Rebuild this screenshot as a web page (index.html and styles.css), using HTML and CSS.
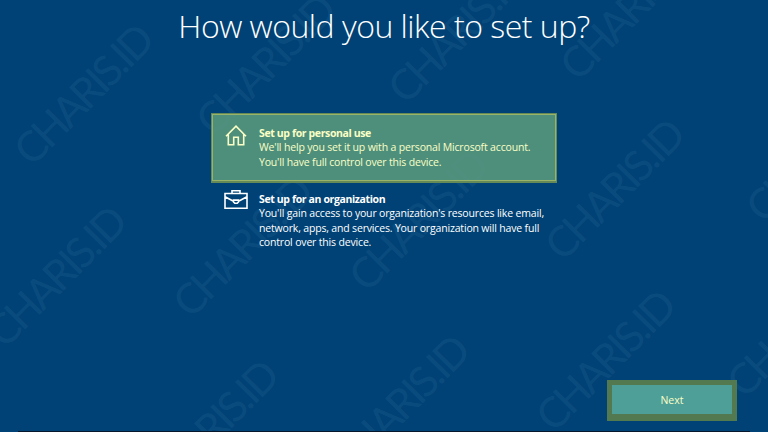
FILE: index.html
```html
<!DOCTYPE html>
<html lang="en">
<head>
  <meta charset="UTF-8" />
  <meta name="viewport" content="width=device-width, initial-scale=1.0"/>
  <title>How would you like to set up?</title>
  <link rel="stylesheet" href="styles.css">
</head>
<body>
  <svg class="watermark" viewBox="0 0 768 432" aria-hidden="true">
    <defs>
      <text id="mark" x="-19" y="16" textLength="178" lengthAdjust="spacing" transform="rotate(-45.3)">CHARIS.ID</text>
    </defs>
    <use href="#mark" x="34" y="143"/>
    <use href="#mark" x="216" y="113"/>
    <use href="#mark" x="408" y="81"/>
    <use href="#mark" x="580" y="58"/>
    <use href="#mark" x="7" y="325"/>
    <use href="#mark" x="193" y="295"/>
    <use href="#mark" x="369" y="269"/>
    <use href="#mark" x="565" y="238"/>
    <use href="#mark" x="766" y="200"/>
    <use href="#mark" x="159" y="479"/>
    <use href="#mark" x="350" y="454"/>
    <use href="#mark" x="556" y="409"/>
    <use href="#mark" x="747" y="375"/>
  </svg>

  <main class="page">
    <h1>How would you like to set up?</h1>

    <div class="options">
      <div class="option selected">
        <svg class="icon" viewBox="0 0 24 24">
          <path d="M2 12.2 12 2.2 22 12.2M4.3 10.3V20.8H9.7V13.2H14.3V20.8H19.7V10.3"/>
        </svg>
        <div class="option-text">
          <h2>Set up for personal use</h2>
          <p>We'll help you set it up with a personal Microsoft account.</p>
          <p>You'll have full control over this device.</p>
        </div>
      </div>

      <div class="option">
        <svg class="icon" viewBox="0 0 24 24">
          <path d="M1 5.5H23V20.3H1ZM8 5.5V2.7H16V5.5M1 8.8 9.5 13.3M23 8.8 14.5 13.3M9.5 12.1H14.5V13.9L13.2 15.2H10.8L9.5 13.9Z"/>
        </svg>
        <div class="option-text">
          <h2>Set up for an organization</h2>
          <p>You'll gain access to your organization's resources like email,</p>
          <p>network, apps, and services. Your organization will have full</p>
          <p>control over this device.</p>
        </div>
      </div>
    </div>

    <div class="footer">
      <button class="next">Next</button>
    </div>
    <div class="taskbar"></div>
  </main>
</body>
</html>
```

FILE: styles.css
```css
body {
  margin: 0;
  background-color: #004275;
  color: white;
  font-family: "Open Sans", "Noto Sans", sans-serif;
  overflow: hidden;
}

.watermark {
  position: absolute;
  top: 0;
  left: 0;
  width: 768px;
  height: 432px;
  fill: rgba(80, 145, 190, 0.15);
  font-family: Lato, sans-serif;
  font-size: 42px;
}

.page {
  position: relative;
  display: flex;
  flex-direction: column;
  width: 768px;
  height: 432px;
}

h1 {
  height: 54px;
  margin: 0;
  line-height: 51px;
  text-align: center;
  font-size: 32px;
  font-weight: 300;
  letter-spacing: -0.5px;
  white-space: nowrap;
}

.options {
  width: 346px;
  margin: 59px 0 0 211px;
}

.option {
  display: flex;
  box-sizing: border-box;
  padding: 5px 0 0 13px;
}

.option.selected {
  height: 70px;
  padding: 10px 0 0 10px;
  border: 1px solid #668a57;
  border-width: 1px 1px 2px;
  background-color: rgba(85, 150, 125, 0.92);
  box-shadow: inset 0 0 0 1px #99b369;
  color: #fbffc6;
}

.option.selected .icon {
  margin-left: 2px;
}

.icon {
  flex: none;
  width: 24px;
  height: 24px;
  margin-right: 11px;
  fill: none;
  stroke: currentColor;
  stroke-width: 1.6;
}

.option.selected .option-text {
  padding-top: 2px;
}

.option-text {
  padding-top: 4px;
  font-size: 10.5px;
  font-weight: 500;
  line-height: 14.3px;
  letter-spacing: -0.17px;
  white-space: nowrap;
}

h2, p {
  margin: 0;
  font-size: inherit;
}

h2 {
  font-weight: 700;
  letter-spacing: -0.37px;
}

.footer {
  display: flex;
  justify-content: flex-end;
  margin: auto 31px 10px 0;
}

.next {
  width: 130px;
  height: 41px;
  padding: 0;
  border: 5px solid #52794f;
  border-bottom-width: 7px;
  background-color: #4f9f99;
  color: #fbffc6;
  font-family: inherit;
  font-size: 10.5px;
  font-weight: 500;
}

.taskbar {
  height: 1px;
  margin: 0 18px;
  background-color: #08182c;
}
```
